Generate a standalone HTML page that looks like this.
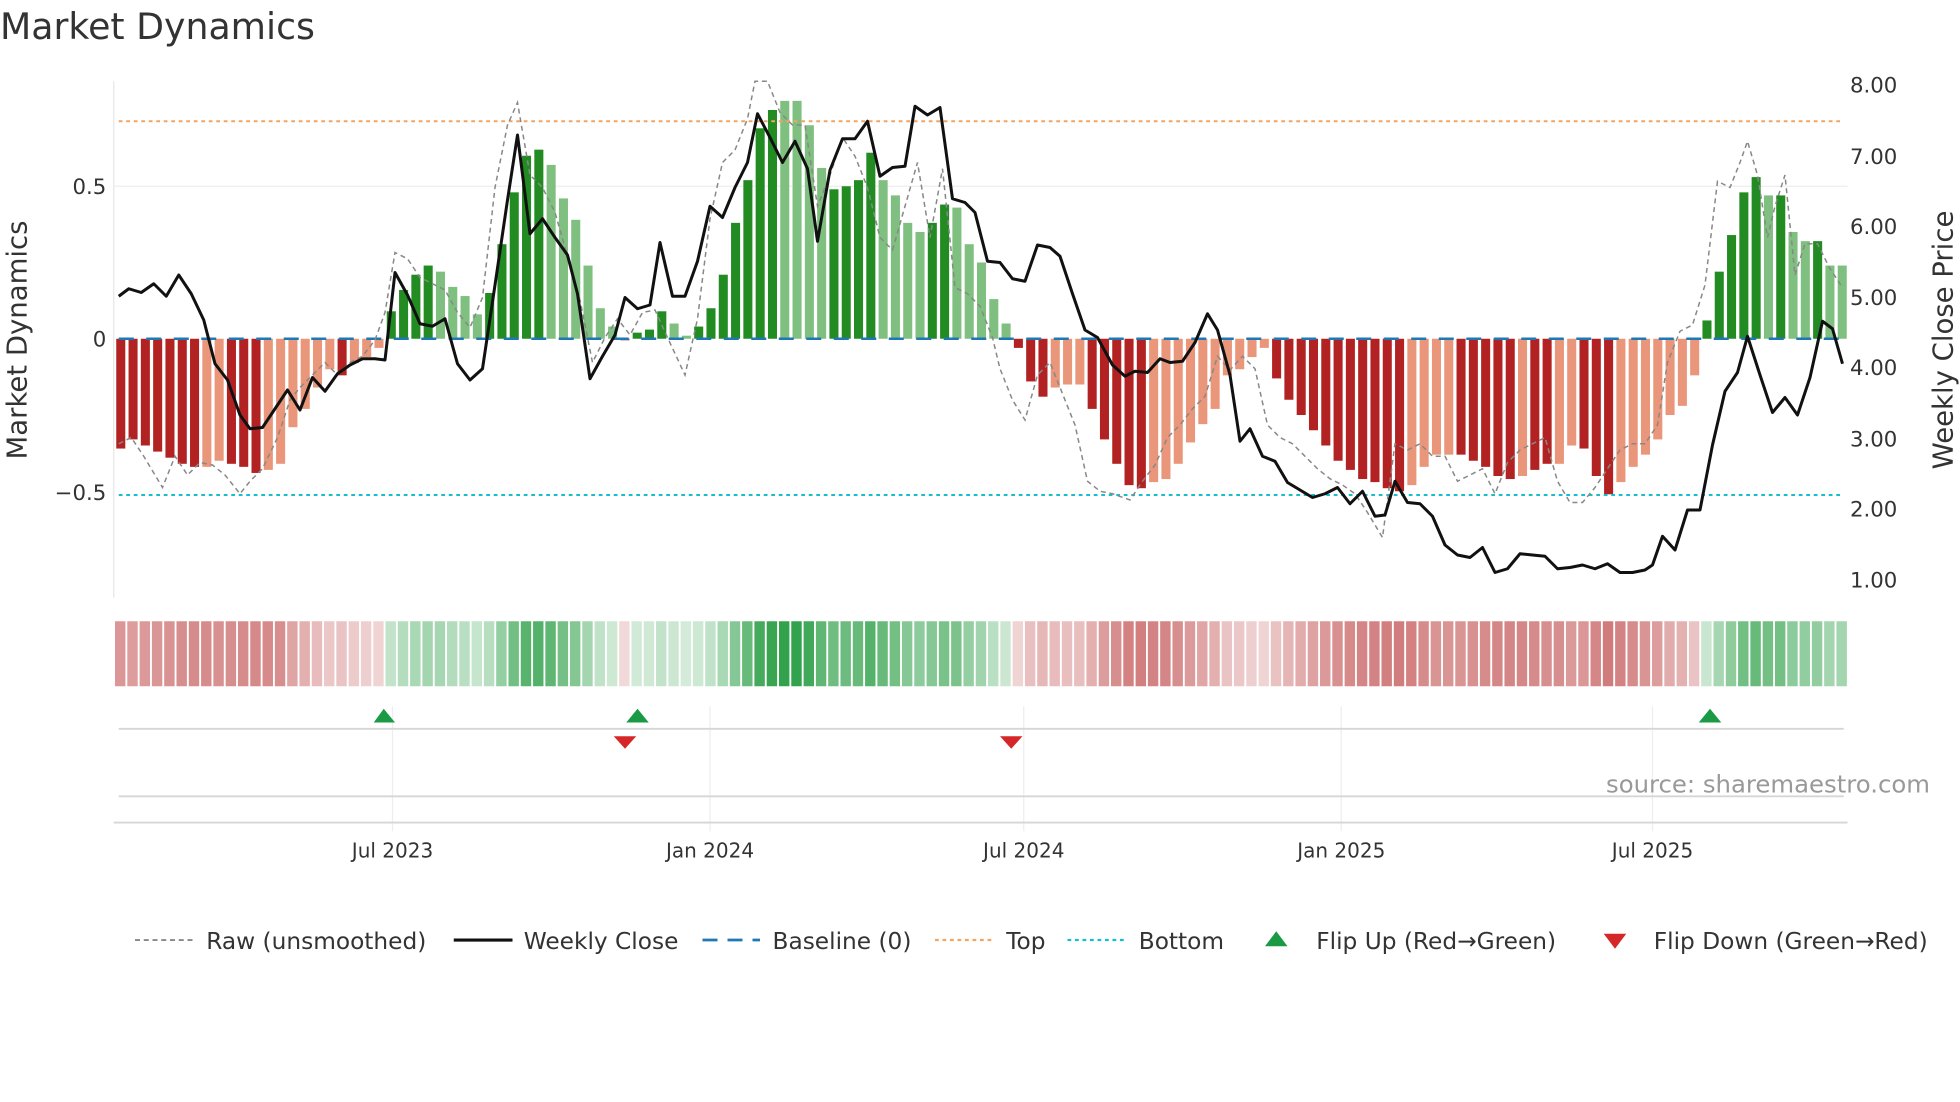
<!DOCTYPE html>
<html><head><meta charset="utf-8"><style>
html,body{margin:0;padding:0;background:#fff;}
svg{display:block;font-family:"DejaVu Sans","Liberation Sans",sans-serif;}
</style></head><body>
<svg id="s" width="1960" height="1102" viewBox="0 0 1568 881.6" xmlns="http://www.w3.org/2000/svg">
<text x="0" y="31" font-size="29" fill="#333">Market Dynamics</text>
<line x1="91" y1="65" x2="91" y2="478" stroke="#e6e6e6"/>
<line x1="91" y1="149" x2="1478" y2="149" stroke="#eee"/>
<g id="bars"></g>
<g id="heat"></g>
<line x1="95" y1="271" x2="1475" y2="271" stroke="#1f77b4" stroke-width="2" stroke-dasharray="12,10"/>
<line x1="95" y1="97" x2="1475" y2="97" stroke="#f4a460" stroke-width="1.6" stroke-dasharray="3,3"/>
<line x1="95" y1="396" x2="1475" y2="396" stroke="#17becf" stroke-width="1.6" stroke-dasharray="3,3"/>
<polyline id="raw" fill="none" stroke="#888" stroke-width="1.2" stroke-dasharray="4,3"/>
<polyline id="close" fill="none" stroke="#111" stroke-width="2.4" stroke-linejoin="round"/>
<g font-size="17" fill="#333">
<text x="85" y="155" text-anchor="end">0.5</text>
<text x="85" y="277" text-anchor="end">0</text>
<text x="85" y="400" text-anchor="end">−0.5</text>
<text x="1480" y="74">8.00</text><text x="1480" y="131">7.00</text><text x="1480" y="187">6.00</text>
<text x="1480" y="244">5.00</text><text x="1480" y="300">4.00</text><text x="1480" y="357">3.00</text>
<text x="1480" y="413">2.00</text><text x="1480" y="470">1.00</text>
</g>
<text transform="translate(21,272) rotate(-90)" font-size="22" fill="#333" text-anchor="middle">Market Dynamics</text>
<text transform="translate(1562,272) rotate(-90)" font-size="22" fill="#333" text-anchor="middle">Weekly Close Price</text>
<g stroke="#eee">
<line x1="314" y1="565" x2="314" y2="665"/><line x1="568" y1="565" x2="568" y2="665"/><line x1="819" y1="565" x2="819" y2="665"/><line x1="1073" y1="565" x2="1073" y2="665"/><line x1="1322" y1="565" x2="1322" y2="665"/>
</g>
<line x1="95" y1="583" x2="1475" y2="583" stroke="#d6d6d6" stroke-width="1.5"/>
<line x1="95" y1="637" x2="1475" y2="637" stroke="#d6d6d6" stroke-width="1.5"/>
<line x1="91" y1="658" x2="1478" y2="658" stroke="#d6d6d6" stroke-width="1.5"/>
<g fill="#1a9a44"><path d="M299,578L307,567L316,578Z"/><path d="M501,578L510,567L519,578Z"/><path d="M1359,578L1368,567L1377,578Z"/></g>
<g fill="#d62728"><path d="M491,589L500,599L509,589Z"/><path d="M800,589L809,599L818,589Z"/></g>
<text x="1544" y="634" font-size="19.5" fill="#999" text-anchor="end">source: sharemaestro.com</text>
<g font-size="16" fill="#333" text-anchor="middle">
<text x="314" y="686">Jul 2023</text><text x="568" y="686">Jan 2024</text><text x="819" y="686">Jul 2024</text><text x="1073" y="686">Jan 2025</text><text x="1322" y="686">Jul 2025</text>
</g>
<g font-size="18.6" fill="#333">
<line x1="108" y1="752" x2="154" y2="752" stroke="#888" stroke-width="1.5" stroke-dasharray="4,3"/>
<text x="165" y="759">Raw (unsmoothed)</text>
<line x1="363" y1="752" x2="410" y2="752" stroke="#111" stroke-width="2.5"/>
<text x="419" y="759">Weekly Close</text>
<line x1="562" y1="752" x2="608" y2="752" stroke="#1f77b4" stroke-width="2.2" stroke-dasharray="12,8"/>
<text x="618" y="759">Baseline (0)</text>
<line x1="748" y1="752" x2="794" y2="752" stroke="#f4a460" stroke-width="1.8" stroke-dasharray="3,3"/>
<text x="805" y="759">Top</text>
<line x1="854" y1="752" x2="900" y2="752" stroke="#17becf" stroke-width="1.8" stroke-dasharray="3,3"/>
<text x="911" y="759">Bottom</text>
<path d="M1012,757L1021,745L1030,757Z" fill="#1a9a44"/>
<text x="1053" y="759">Flip Up (Red→Green)</text>
<path d="M1283,747L1292,759L1301,747Z" fill="#d62728"/>
<text x="1323" y="759">Flip Down (Green→Red)</text>
</g>
</svg>
<script>
var NS="http://www.w3.org/2000/svg";
var B=[[-.36,1],[-.33,1],[-.35,1],[-.37,1],[-.39,1],[-.41,1],[-.42,1],[-.42,0],[-.40,0],[-.41,1],[-.42,1],[-.44,1],[-.43,0],[-.41,0],[-.29,0],[-.23,0],[-.16,0],[-.10,0],[-.12,1],[-.08,0],[-.06,0],[-.03,0],
[.09,1],[.16,1],[.21,1],[.24,1],[.22,0],[.17,0],[.14,0],[.08,0],[.15,1],[.31,1],[.48,1],[.60,1],[.62,1],[.57,0],[.46,0],[.39,0],[.24,0],[.10,0],[.04,0],[-.005,1],[.02,1],[.03,1],[.09,1],[.05,0],[.01,0],[.04,1],[.10,1],[.21,1],[.38,1],[.52,1],[.69,1],[.75,1],[.78,0],[.78,0],[.70,0],[.56,0],[.49,1],[.50,1],[.52,1],[.61,1],[.52,0],[.47,0],[.38,0],[.35,0],[.38,1],[.44,1],[.43,0],[.31,0],[.25,0],[.13,0],[.05,0],
[-.03,1],[-.14,1],[-.19,1],[-.16,0],[-.15,0],[-.15,0],[-.23,1],[-.33,1],[-.41,1],[-.48,1],[-.49,1],[-.47,0],[-.46,0],[-.41,0],[-.34,0],[-.28,0],[-.23,0],[-.12,0],[-.10,0],[-.06,0],[-.03,0],[-.13,1],[-.20,1],[-.25,1],[-.30,1],[-.35,1],[-.40,1],[-.43,1],[-.46,1],[-.47,1],[-.49,1],[-.50,1],[-.48,0],[-.42,0],[-.38,0],[-.38,0],[-.38,1],[-.40,1],[-.42,1],[-.45,1],[-.46,1],[-.45,0],[-.43,1],[-.41,1],[-.41,0],[-.35,0],[-.36,1],[-.45,1],[-.51,1],[-.47,0],[-.42,0],[-.38,0],[-.33,0],[-.25,0],[-.22,0],[-.12,0],
[.06,1],[.22,1],[.34,1],[.48,1],[.53,1],[.47,0],[.47,1],[.35,0],[.32,0],[.32,1],[.24,0],[.24,0]];
var gb=document.getElementById("bars"),gh=document.getElementById("heat");
var n=B.length,x0=92,x1=1479,step=(x1-x0)/n;
for(var i=0;i<n;i++){var v=B[i][0],d=B[i][1];var x=x0+i*step;var h=v*244;
var r=document.createElementNS(NS,"rect");r.setAttribute("x",x+1);r.setAttribute("width",step-2.6);
r.setAttribute("y",h>0?271-h:271);r.setAttribute("height",Math.abs(h));
r.setAttribute("fill",v>0?(d?"#228b22":"#7fbf7f"):(d?"#b22222":"#e9967a"));gb.appendChild(r);
var c=document.createElementNS(NS,"rect");c.setAttribute("x",x);c.setAttribute("width",step-1.5);c.setAttribute("y",497);c.setAttribute("height",52);
var a=Math.min(1,0.2+Math.abs(v)*1.0);c.setAttribute("fill",v>0?"rgb(46,160,72)":"rgb(190,70,70)");c.setAttribute("fill-opacity",v>0?a:Math.min(1,a*1.0));gh.appendChild(c);}
document.getElementById("close").setAttribute("points","95,237 103,231 113,234 123,227 133,237 143,220 153,235 163,256 172,291 182,304 192,332 200,343 210,342 220,327 230,312 240,328 250,302 260,313 270,299 280,292 290,287 300,287 308,288 316,218 326,236 336,259 346,261 356,255 366,291 376,304 386,295 396,228 406,160 414,108 424,187 434,175 444,190 454,204 462,235 472,303 482,285 492,268 500,238 510,247 520,244 528,194 538,237 548,237 558,209 568,165 578,174 588,150 598,130 606,91 616,110 626,130 636,113 646,135 654,193 664,136 674,111 684,111 694,97 704,141 714,134 724,133 732,85 742,92 752,86 762,159 772,162 780,170 790,209 800,210 810,223 820,225 830,196 840,198 848,205 858,235 868,264 878,270 890,292 900,301 908,297 918,298 928,287 936,290 946,289 956,274 966,251 974,264 984,300 992,353 1000,343 1010,365 1020,369 1030,386 1040,392 1050,398 1060,395 1070,390 1080,403 1090,393 1100,413 1108,412 1116,385 1126,402 1136,403 1146,413 1156,436 1166,444 1176,446 1186,438 1196,458 1206,455 1216,443 1226,444 1236,445 1246,455 1256,454 1266,452 1276,455 1286,451 1296,458 1306,458 1316,456 1322,452 1330,429 1340,440 1350,408 1360,408 1370,356 1380,313 1390,298 1398,269 1408,300 1418,330 1428,318 1438,332 1448,302 1458,257 1466,263 1474,291");
document.getElementById("raw").setAttribute("points","95,355 105,350 115,365 130,390 140,365 150,380 160,370 170,372 180,380 192,395 200,385 210,375 222,350 232,320 240,310 250,300 260,290 270,300 280,290 290,285 300,272 308,250 316,202 326,207 336,222 346,227 356,232 366,250 376,262 386,238 396,150 406,100 414,82 424,140 434,150 444,170 454,205 464,240 474,290 484,270 494,255 504,268 514,250 524,248 534,270 548,300 558,255 568,175 578,130 588,120 598,95 604,65 614,65 624,90 634,100 644,100 654,165 664,140 674,110 684,125 694,150 704,190 714,200 724,165 734,130 744,190 754,135 764,230 774,235 784,245 794,270 800,295 810,320 820,336 830,300 840,290 850,315 860,340 870,385 880,393 890,395 904,400 914,385 924,372 934,350 944,340 954,327 964,317 974,285 984,296 994,285 1004,295 1014,340 1024,350 1034,355 1044,365 1054,375 1064,383 1074,388 1084,395 1094,410 1106,430 1116,355 1126,360 1136,355 1146,365 1156,365 1166,385 1176,380 1186,375 1196,395 1206,370 1216,360 1226,355 1236,350 1246,385 1256,402 1266,402 1276,390 1286,375 1296,360 1306,355 1316,355 1326,340 1334,290 1344,265 1354,260 1364,228 1374,145 1384,150 1392,130 1398,113 1406,140 1414,190 1420,165 1428,140 1436,220 1444,195 1454,195 1464,215 1474,230");
</script>
</body></html>
